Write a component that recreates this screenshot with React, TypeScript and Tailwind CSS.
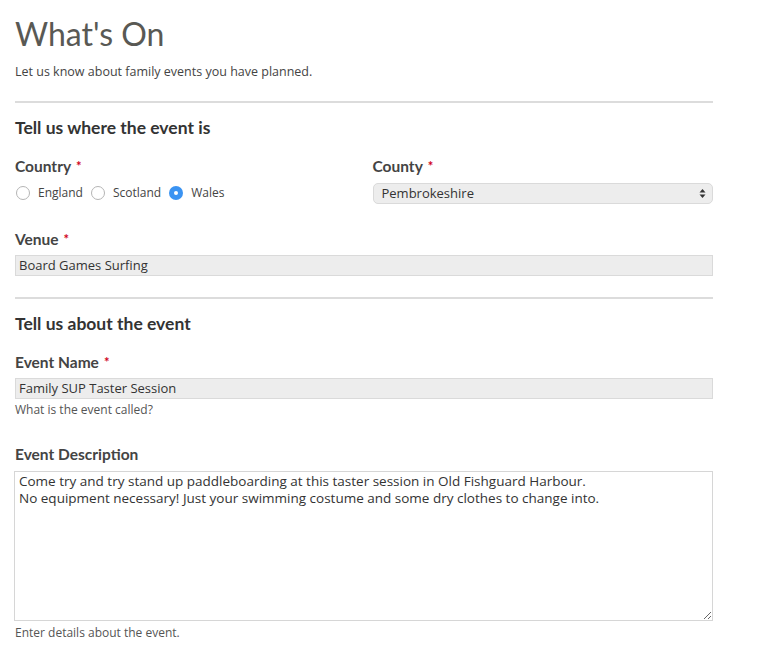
import React from 'react'

const body = {fontFamily: '"Open Sans", "Liberation Sans", sans-serif'}
const head = {fontFamily: 'Lato, sans-serif'}

function Req() {
  return <span className="ml-[5px] align-top text-[13px] text-[#d0021b]">*</span>
}

function Label({children, required}: {children: React.ReactNode; required?: boolean}) {
  return (
    <div className="h-[18px] text-[15.5px] font-bold leading-[18px] text-[#444]" style={head}>
      {children}
      {required && <Req />}
    </div>
  )
}

function Radio({label, checked}: {label: string; checked?: boolean}) {
  return (
    <label className="flex items-center gap-[8px] text-[12px] text-[#444]">
      {checked ? (
        <span className="flex h-[14px] w-[14px] items-center justify-center rounded-full bg-[#3a93f2]">
          <span className="h-[4px] w-[4px] rounded-full bg-white" />
        </span>
      ) : (
        <span className="h-[14px] w-[14px] rounded-full border border-[#b5b5b5] bg-white" />
      )}
      {label}
    </label>
  )
}

export default function App() {
  return (
    <div className="min-h-[651px] bg-white pl-[15px]" style={body}>
      <div className="w-[698px]">
        <h1 className="pt-[14px] text-[32px] leading-[40px] text-[#595954]" style={head}>
          What's On
        </h1>
        <p className="mt-[9px] h-[18px] text-[12.5px] leading-[18px] text-[#444]">
          Let us know about family events you have planned.
        </p>
        <div className="mt-[20px] border-t-2 border-[#dcdcdc]" />

        <h2 className="mt-[16px] h-[18px] text-[17.5px] font-bold leading-[18px] text-[#333]" style={head}>
          Tell us where the event is
        </h2>

        <div className="mt-[20px] grid grid-cols-2 gap-[17px]">
          <div>
            <Label required>Country</Label>
            <div className="mt-[9px] flex h-[18px] items-center gap-[8px] pl-[1px]">
              <Radio label="England" />
              <Radio label="Scotland" />
              <Radio label="Wales" checked />
            </div>
          </div>
          <div>
            <Label required>County</Label>
            <div className="mt-[8px] flex h-[21px] items-center justify-between rounded-[5px] border border-[#dadada] bg-[#ededed] pl-[8px] pr-[6px] text-[13px] text-[#333]">
              <span>Pembrokeshire</span>
              <svg width="7" height="11" viewBox="0 0 7 11" className="text-[#333]">
                <path d="M3.5 1 L6.5 4.5 H0.5 Z" fill="currentColor" />
                <path d="M3.5 10 L6.5 6.5 H0.5 Z" fill="currentColor" />
              </svg>
            </div>
          </div>
        </div>

        <div className="mt-[26px]">
          <Label required>Venue</Label>
        </div>
        <div className="mt-[7px] flex h-[21px] items-center border border-[#dadada] bg-[#ededed] px-[3px] text-[13px] text-[#333]">
          Board Games Surfing
        </div>

        <div className="mt-[21px] border-t-2 border-[#dcdcdc]" />

        <h2 className="mt-[16px] h-[18px] text-[17.5px] font-bold leading-[18px] text-[#333]" style={head}>
          Tell us about the event
        </h2>

        <div className="mt-[20px]">
          <Label required>Event Name</Label>
        </div>
        <div className="mt-[7px] flex h-[21px] items-center border border-[#dadada] bg-[#ededed] px-[3px] text-[13px] text-[#333]">
          Family SUP Taster Session
        </div>
        <p className="mt-[3px] h-[16px] text-[12px] leading-[16px] text-[#555]">What is the event called?</p>

        <div className="mt-[27px]">
          <Label>Event Description</Label>
        </div>
        <textarea
          readOnly
          className="mt-[8px] block h-[150px] w-[699px] -ml-[1px] resize-y border border-[#d6d6d6] bg-white px-[4px] py-[1px] text-[13.5px] leading-[17px] text-[#333] outline-none"
          style={body}
          defaultValue={
            'Come try and try stand up paddleboarding at this taster session in Old Fishguard Harbour.\nNo equipment necessary! Just your swimming costume and some dry clothes to change into.'
          }
        />
        <p className="mt-[4px] h-[16px] text-[12px] leading-[16px] text-[#555]">Enter details about the event.</p>
      </div>
    </div>
  )
}
